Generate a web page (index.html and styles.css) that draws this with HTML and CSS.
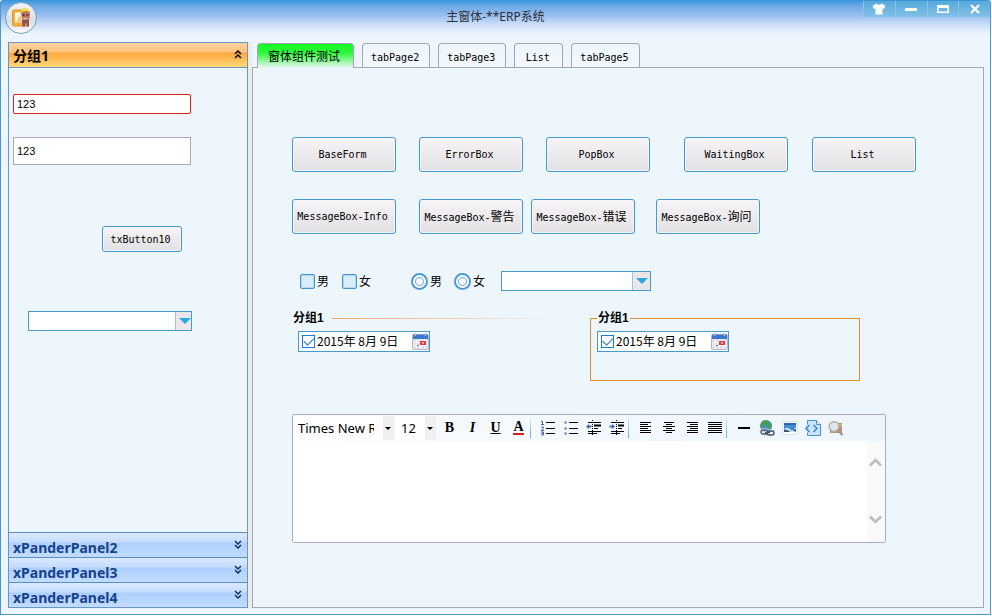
FILE: index.html
```html
<!DOCTYPE html>
<html lang="zh-CN">
<head>
  <meta charset="UTF-8">
  <meta name="viewport" content="width=device-width, initial-scale=1">
  <title>主窗体-**ERP系统</title>
  <link rel="stylesheet" href="styles.css">
</head>
<body>
<div class="window">
  <header class="titlebar">
    <svg class="logo" width="34" height="34" viewBox="0 0 34 34">
      <defs>
        <linearGradient id="ball" x1="0" y1="0" x2="0" y2="1">
          <stop offset="0" stop-color="#f4f4f8"/><stop offset="0.6" stop-color="#dcdce2"/><stop offset="1" stop-color="#fdfdff"/>
        </linearGradient>
      </defs>
      <circle cx="17" cy="17" r="15.500" fill="url(#ball)" stroke="#6fa6bf"/>
      <rect x="8.500" y="9" width="15" height="16" rx="1.500" fill="#f3ae35" stroke="#dd9830"/>
      <path d="M11 11.500h8v10h-8z" fill="#fff6e4"/>
      <path d="M12 21.500l4-8 3 8z" fill="#ecc98d"/>
      <path d="M17 12.500q0-4.500 4.500-4.500t4.500 5.500l-1 6h-6.500z" fill="#bd7560"/>
      <path d="M17 11q1-4.500 5-4 3.500 .5 3.500 4-4-2-8.500 .5z" fill="#f3e04c"/>
      <path d="M18.500 13h2v2h-2zM22.500 13h2v2h-2z" fill="#6a3540"/>
      <path d="M18 19h7v6.500h-2.500v-3h-1.500v3h-2.500z" fill="#8d5458"/>
      <path d="M19.500 17h4v1h-4z" fill="#f2d0b0"/>
    </svg>
    <h1 class="title">主窗体-**ERP系统</h1>
    <div class="controls">
      <button type="button" aria-label="皮肤"><svg width="14" height="12" viewBox="0 0 14 12"><path d="M4 .5Q7 3 10 .5L13.500 3 12 6l-1.500-.7V11.500h-7V5.300L2 6 .5 3z" fill="#fff"/></svg></button>
      <button type="button" aria-label="最小化"><svg width="14" height="12" viewBox="0 0 14 12"><path d="M1 5h12v3H1z" fill="#fff"/></svg></button>
      <button type="button" aria-label="最大化"><svg width="14" height="12" viewBox="0 0 14 12"><path d="M1 2h12v8H1zM2.500 5v3.500h9V5z" fill="#fff" fill-rule="evenodd"/></svg></button>
      <button type="button" aria-label="关闭"><svg width="12" height="12" viewBox="0 0 12 12"><path d="M2 2l8 8M10 2l-8 8" stroke="#fff" stroke-width="2.200"/></svg></button>
    </div>
  </header>

  <main class="main">
    <aside class="sidebar">
      <button type="button" class="pander open"><span>分组1</span>
        <svg width="8" height="9" viewBox="0 0 8 9"><path d="M1 4l3-3 3 3M1 8l3-3 3 3"/></svg></button>
      <div class="pander-body">
        <input type="text" class="text-box error" value="123" aria-label="文本1">
        <input type="text" class="text-box tall" value="123" aria-label="文本2">
        <button type="button" class="btn small">txButton10</button>
        <span class="combo side"><select aria-label="选择"><option></option></select></span>
      </div>
      <button type="button" class="pander"><span>xPanderPanel2</span>
        <svg width="8" height="9" viewBox="0 0 8 9"><path d="M1 1l3 3 3-3M1 5l3 3 3-3"/></svg></button>
      <button type="button" class="pander"><span>xPanderPanel3</span>
        <svg width="8" height="9" viewBox="0 0 8 9"><path d="M1 1l3 3 3-3M1 5l3 3 3-3"/></svg></button>
      <button type="button" class="pander"><span>xPanderPanel4</span>
        <svg width="8" height="9" viewBox="0 0 8 9"><path d="M1 1l3 3 3-3M1 5l3 3 3-3"/></svg></button>
    </aside>
    <div class="splitter"></div>

    <section class="content">
      <nav class="tabs">
        <button type="button" class="tab active">窗体组件测试</button>
        <button type="button" class="tab">tabPage2</button>
        <button type="button" class="tab">tabPage3</button>
        <button type="button" class="tab">List</button>
        <button type="button" class="tab">tabPage5</button>
      </nav>

      <div class="page">
        <div class="btn-row first">
          <button type="button" class="btn">BaseForm</button>
          <button type="button" class="btn">ErrorBox</button>
          <button type="button" class="btn">PopBox</button>
          <button type="button" class="btn">WaitingBox</button>
          <button type="button" class="btn">List</button>
        </div>
        <div class="btn-row second">
          <button type="button" class="btn">MessageBox-Info</button>
          <button type="button" class="btn">MessageBox-<span class="zh">警告</span></button>
          <button type="button" class="btn">MessageBox-<span class="zh">错误</span></button>
          <button type="button" class="btn">MessageBox-<span class="zh">询问</span></button>
        </div>

        <div class="options">
          <div class="option-group checks">
            <label class="option"><input type="checkbox" class="check"><span>男</span></label>
            <label class="option"><input type="checkbox" class="check"><span>女</span></label>
          </div>
          <div class="option-group radios">
            <label class="option"><input type="radio" name="sex" class="radio"><span>男</span></label>
            <label class="option"><input type="radio" name="sex" class="radio"><span>女</span></label>
          </div>
          <span class="combo wide"><select aria-label="下拉框"><option></option></select></span>
        </div>

        <div class="groups">
          <fieldset class="group line">
            <legend>分组1</legend>
            <div class="date">
              <input type="checkbox" class="date-check" checked aria-label="启用日期">
              <input type="text" class="date-text" value="2015年 8月 9日" aria-label="日期">
              <button type="button" class="date-btn" aria-label="日历"><svg width="17" height="17"><use href="#calendar"/></svg></button>
            </div>
          </fieldset>
          <fieldset class="group box">
            <legend>分组1</legend>
            <div class="date">
              <input type="checkbox" class="date-check" checked aria-label="启用日期">
              <input type="text" class="date-text" value="2015年 8月 9日" aria-label="日期">
              <button type="button" class="date-btn" aria-label="日历"><svg width="17" height="17"><use href="#calendar"/></svg></button>
            </div>
          </fieldset>
        </div>

        <div class="editor">
          <div class="toolbar">
            <span class="font-combo"><select class="font-name" aria-label="字体"><option>Times New Roman</option></select></span>
            <span class="font-combo"><select class="font-size" aria-label="字号"><option>12</option></select></span>
            <button type="button" class="tool bold">B</button>
            <button type="button" class="tool italic">I</button>
            <button type="button" class="tool underline">U</button>
            <button type="button" class="tool color"><span>A</span></button>
            <i class="sep"></i>
            <button type="button" class="tool" aria-label="编号"><svg width="16" height="16" viewBox="0 0 16 16"><path d="M6 2.500h9M6 8.500h9M6 13.500h9" stroke="#000"/><path d="M1 1.500h1.500v3M1 4.500h3M1 7h2.500v1.500L1 10.500h3M1 12h2.500v3H1M1.500 13.500h2" stroke="#4a66ad" fill="none"/></svg></button>
            <button type="button" class="tool" aria-label="项目符号"><svg width="16" height="16" viewBox="0 0 16 16"><path d="M6 2.500h9M6 8.500h9M6 13.500h9" stroke="#000"/><path d="M1.500 1.500h2v2h-2zM1.500 7.500h2v2h-2zM1.500 12.500h2v2h-2z" fill="#4a66ad"/></svg></button>
            <button type="button" class="tool" aria-label="减少缩进"><svg width="16" height="16" viewBox="0 0 16 16"><path d="M2 2.500h13M8 8.500h4M2 11.500h13M2 13.500h9" stroke="#000"/><path d="M8 5.500h7" stroke="#000" stroke-width="2"/><path d="M6.500 0v16" stroke="#000" stroke-dasharray="1 1"/><path d="M0 6.500L3 4v1.500h2.500v2H3V9z" fill="#4164b5"/></svg></button>
            <button type="button" class="tool" aria-label="增加缩进"><svg width="16" height="16" viewBox="0 0 16 16"><path d="M2 2.500h13M9 8.500h4M2 11.500h13M2 13.500h9" stroke="#000"/><path d="M9 5.500h6" stroke="#000" stroke-width="2"/><path d="M7.500 0v16" stroke="#000" stroke-dasharray="1 1"/><path d="M6 6.500L3 4v1.500H.5v2H3V9z" fill="#4164b5"/></svg></button>
            <i class="sep"></i>
            <button type="button" class="tool" aria-label="左对齐"><svg width="16" height="16" viewBox="0 0 16 16"><path d="M2 2.500h11M2 4.500h8M2 6.500h11M2 8.500h8M2 10.500h11M2 12.500h11" stroke="#000"/></svg></button>
            <button type="button" class="tool" aria-label="居中"><svg width="16" height="16" viewBox="0 0 16 16"><path d="M3 2.500h10M5 4.500h6M2 6.500h12M5 8.500h6M2 10.500h12M5 12.500h6" stroke="#000"/></svg></button>
            <button type="button" class="tool" aria-label="右对齐"><svg width="16" height="16" viewBox="0 0 16 16"><path d="M3 2.500h11M6 4.500h8M3 6.500h11M6 8.500h8M3 10.500h11M3 12.500h11" stroke="#000"/></svg></button>
            <button type="button" class="tool" aria-label="两端对齐"><svg width="16" height="16" viewBox="0 0 16 16"><path d="M1 2.500h14M1 4.500h14M1 6.500h14M1 8.500h14M1 10.500h14M1 12.500h14" stroke="#000"/></svg></button>
            <i class="sep"></i>
            <button type="button" class="tool" aria-label="水平线"><svg width="16" height="16" viewBox="0 0 16 16"><path d="M2 8h12" stroke="#000" stroke-width="2"/></svg></button>
            <button type="button" class="tool" aria-label="链接"><svg width="16" height="16" viewBox="0 0 16 16"><circle cx="7" cy="6" r="6" fill="#4d86cf"/><path d="M3 1.500q4-2.500 6 0l-1 3-3 1-1 4Q0 7 3 1.500zM9.500 2.500l3 1q1 4-2 6l-2-3z" fill="#45a347"/><path d="M3.500 10h3.500a2 2 0 010 4H4a2 2 0 01-.5-4zM10 11h3a2 2 0 010 4h-3a2 2 0 010-4z" fill="none" stroke="#dce6ee" stroke-width="3"/><path d="M4 10h3a2 2 0 010 4H4a2 2 0 010-4zM10 11h3a2 2 0 010 4h-3a2 2 0 010-4zM6 12.500h5" fill="none" stroke="#455a68" stroke-width="1.300"/></svg></button>
            <button type="button" class="tool" aria-label="图片"><svg width="16" height="16" viewBox="0 0 16 16"><path d="M.5 1.500h15v13H.5z" fill="#f8fafc" stroke="#dbe2e8"/><path d="M2 3h12v9H2z" fill="#3f8bd6"/><path d="M2 3h12v2H2z" fill="#2869b4"/><path d="M2 9q4-3 6 0t6-2v5H2z" fill="#b9dbef"/><path d="M2 12V9.500l4 1 2 1.500zM14 12l-4-3 4 .5z" fill="#35505f"/></svg></button>
            <button type="button" class="tool" aria-label="源代码"><svg width="16" height="16" viewBox="0 0 16 16"><path d="M2.500.5h9l4 4v11h-13z" fill="#c8e3fa" stroke="#4e8fce"/><path d="M11.500.5v4h4" fill="#fff" stroke="#4e8fce"/><path d="M4.500 5L1 8.500 4.500 12M8.500 5l3.500 3.500L8.500 12" fill="none" stroke="#e6f2fc" stroke-width="3.500"/><path d="M4.500 5L1 8.500 4.500 12M8.500 5l3.500 3.500L8.500 12" fill="none" stroke="#3f96e0" stroke-width="1.800"/></svg></button>
            <button type="button" class="tool" aria-label="查找"><svg width="16" height="16" viewBox="0 0 16 16"><path d="M2 3h12v10H2z" fill="#bd9566"/><path d="M8 4h6v2H8z" fill="#d8b27c"/><circle cx="6" cy="6.500" r="4.800" fill="#dfe6ec" stroke="#b0b0ae" stroke-width="1.400"/><path d="M9.500 10l5 5" stroke="#9a9792" stroke-width="2.200"/></svg></button>
          </div>
          <div class="edit-area">
            <textarea aria-label="正文"></textarea>
            <div class="scroller">
              <button type="button" aria-label="向上"><svg width="13" height="9" viewBox="0 0 13 9"><path d="M1 7.500l5.500-5.500L12 7.500"/></svg></button>
              <button type="button" aria-label="向下"><svg width="13" height="9" viewBox="0 0 13 9"><path d="M1 1.500L6.500 7 12 1.500"/></svg></button>
            </div>
          </div>
        </div>
      </div>
    </section>
  </main>
</div>

<svg class="defs" width="0" height="0">
  <symbol id="calendar" viewBox="0 0 17 17">
    <rect x="0.500" y="1.500" width="16" height="15" rx="1" fill="#dfe0ec" stroke="#b4b6cc"/>
    <path d="M1 1.500h15V6H1z" fill="#3d77cf"/>
    <path d="M3.500 0v3M13.500 0v3" stroke="#aebbd6" stroke-width="1.500"/>
    <path d="M1 9.500h15M1 12.500h15M4.500 6v10M8.500 6v10M12.500 6v10" stroke="#fafafe"/>
    <path d="M8 8h6v4H8z" fill="#dc3c4c"/>
    <path d="M10 9.500h2v1h-2z" fill="#fff"/>
    <path d="M5 12h2v1H5z" fill="#8d6a76"/>
  </symbol>
</svg>
</body>
</html>
```
FILE: styles.css
```css
* {
  box-sizing: border-box;
}
body {
  margin: 0;
  padding: 0 1px 1px 0;
  height: 100vh;
  background: #fff;
  font-family: "DejaVu Sans Mono", "Noto Sans CJK SC", monospace;
  font-size: 10px;
  color: #000;
}
button, input, select, textarea {
  font: inherit;
  color: inherit;
  margin: 0;
  padding: 0;
}
.defs {
  display: none;
}
.zh, .option, legend {
  font-family: "Liberation Sans", "Noto Sans CJK SC", sans-serif;
  font-size: 12px;
}
.window {
  display: flex;
  flex-direction: column;
  height: 100%;
  border: 1px solid #4c98cb;
  border-top-color: #3b94d9;
  border-radius: 3px 3px 0 0;
  background: #edf5fd;
}

/* title bar */
.titlebar {
  display: grid;
  grid-template-columns: 124px 1fr 127px;
  align-items: start;
  height: 41px;
  padding-left: 3px;
  background: linear-gradient(#3f99dd 0, #6daae6 5px, #91bbee 13px, #c3d9f6 22px, #dfecfa 29px, #edf5fd 33px);
}
.title {
  margin: 6px 0 0;
  text-align: center;
  font: 12px/20px "Noto Sans", "Noto Sans CJK SC", sans-serif;
  color: #2c3036;
}
.controls {
  display: flex;
}
.controls button {
  flex: 1;
  display: flex;
  justify-content: center;
  align-items: center;
  height: 16px;
  border: 0;
  border-left: 1px solid #8cc5e4;
  background: linear-gradient(#55a9dc, #84c0e6);
}

/* body */
.main {
  flex: 1;
  display: grid;
  grid-template-columns: 240px 4px 1fr;
  min-height: 0;
  padding: 0 6px 6px 7px;
}
.splitter {
  background: #ececed;
}
.sidebar {
  display: flex;
  flex-direction: column;
  border: 1px solid #6b95c2;
}
.pander {
  display: flex;
  justify-content: space-between;
  align-items: center;
  height: 25px;
  padding: 5px 5px 0 4px;
  border: 0;
  border-top: 1px solid #5b8dc0;
  background: linear-gradient(#dbe9ff 0, #c6dcff 9px, #aed0ff 10px, #c2dcff 24px);
  font: bold 14px/18px "Noto Sans", "Noto Sans CJK SC", sans-serif;
  color: #15428b;
}
.pander svg {
  fill: none;
  stroke: #15305f;
  stroke-width: 1.5;
  margin-bottom: 6px;
}
.pander.open {
  padding-top: 2px;
  border-top: 0;
  border-bottom: 1px solid #6b95c2;
  background: linear-gradient(#ffd3a0 0, #ffc27c 9px, #ffa73f 10px, #ffd97a 24px);
  color: #000;
}
.pander.open svg {
  margin-bottom: 3px;
  stroke: #000;
}
.pander-body {
  flex: 1;
  display: flex;
  flex-direction: column;
  align-items: flex-start;
  padding: 26px 4px 0;
}
.text-box {
  width: 178px;
  height: 20px;
  padding: 0 3px 1px;
  border: 1px solid #a9aabc;
  background: #fff;
  font: 11px "Liberation Sans", sans-serif;
}
.text-box.error {
  border-color: #d81e1e;
  border-radius: 2px;
}
.text-box.tall {
  height: 28px;
  margin-top: 23px;
}
.btn {
  width: 104px;
  height: 35px;
  padding-right: 3px;
  border: 1px solid #4499cc;
  border-radius: 3px;
  background: linear-gradient(#f7f4f7, #e2e0e2);
  box-shadow: inset 0 0 0 1px #f4f6fa;
  white-space: nowrap;
}
.btn .zh {
  line-height: 12px;
}
.btn.small {
  width: 80px;
  height: 26px;
  margin: 61px 0 0 89px;
}
.combo {
  position: relative;
  display: block;
  height: 20px;
}
.combo select {
  display: block;
  appearance: none;
  width: 100%;
  height: 100%;
  border: 1px solid #469bc8;
  border-radius: 0;
  background: #fff;
}
.combo::before {
  content: "";
  position: absolute;
  top: 1px;
  right: 1px;
  bottom: 1px;
  width: 17px;
  border-left: 1px solid #9fc4dc;
  background: #e9e7ea;
  pointer-events: none;
}
.combo::after {
  content: "";
  position: absolute;
  top: 7px;
  right: 3px;
  border: 6px solid transparent;
  border-top-color: #2aa8e0;
  border-bottom: 0;
  pointer-events: none;
}
.combo.side {
  width: 164px;
  margin: 59px 0 0 15px;
}
.combo.side::before {
  width: 15px;
}
.combo.side::after {
  right: 1px;
}
.combo.wide {
  width: 150px;
}

/* tabs */
.content {
  display: flex;
  flex-direction: column;
  min-width: 0;
}
.tabs {
  display: flex;
  align-items: flex-end;
  gap: 8px;
  height: 25px;
  padding-left: 5px;
}
.tab {
  min-width: 49px;
  height: 24px;
  padding: 3px 10px 0 8px;
  border: 1px solid #a3a8b4;
  border-bottom: 0;
  border-radius: 4px 4px 0 0;
  background: linear-gradient(#edf5fd, #f4f8fd);
}
.tab.active {
  height: 25px;
  margin-bottom: -1px;
  padding: 0 13px 2px 10px;
  z-index: 1;
  background: linear-gradient(#12fb22 0, #2df83a 9px, #edf8f5 24px);
  font: 12px "Liberation Sans", "Noto Sans CJK SC", sans-serif;
}
.page {
  flex: 1;
  padding: 69px 39px 0;
  border: 1px solid #a3a8b4;
}
.btn-row {
  display: grid;
}
.first {
  grid-template-columns: 127px 127px 138px 128px 104px;
}
.second {
  grid-template-columns: 127px 112px 125px 104px;
  margin-top: 27px;
}

/* check boxes and radios */
.options {
  display: flex;
  align-items: center;
  height: 20px;
  margin-top: 37px;
  padding-left: 8px;
}
.option-group {
  display: flex;
}
.checks {
  width: 111px;
  gap: 13px;
}
.radios {
  width: 90px;
  gap: 12px;
}
.option {
  display: flex;
  align-items: center;
  gap: 2px;
  line-height: 18px;
}
.option span {
  padding-top: 2px;
}
.check {
  appearance: none;
  width: 15px;
  height: 15px;
  border: 1px solid #3f97cd;
  border-radius: 2px;
  background: #d9ecfa;
  box-shadow: inset 0 0 0 1px #b3d8f2;
}
.radio {
  appearance: none;
  width: 17px;
  height: 17px;
  border: 2px solid #4a9bd3;
  border-radius: 50%;
  background: radial-gradient(circle, #f4f9fe 3px, #7cb0d8 4px, #fff 5px);
}

/* group boxes */
.groups {
  display: grid;
  grid-template-columns: 298px 270px;
  margin-top: 19px;
}
.group {
  margin: 0;
  min-width: 0;
}
legend {
  padding: 0 1px;
  font-weight: bold;
  line-height: 16px;
}
.line {
  padding: 5px 6px 0 0;
  border: 0;
}
.line legend {
  display: flex;
  align-items: center;
  gap: 8px;
  width: 270px;
}
.line legend::after {
  content: "";
  flex: 1;
  height: 1px;
  background: linear-gradient(90deg, #f3a26c, #edf5fd);
}
.line .date {
  margin-left: 6px;
}
.box {
  padding: 5px 6px 28px;
  border: 1px solid #e1922d;
}
.date {
  display: flex;
  align-items: center;
  width: 132px;
  height: 21px;
  padding: 0 0 0 3px;
  border: 1px solid #469bc8;
  background: #fff;
}
.date-check {
  appearance: none;
  flex: none;
  display: grid;
  place-items: center;
  width: 13px;
  height: 13px;
  border: 1px solid #1a7fd0;
  background: #fff;
}
.date-check:checked::after {
  content: "";
  width: 9px;
  height: 5px;
  margin-bottom: 3px;
  border: solid #2877bb;
  border-width: 0 0 1px 1px;
  transform: rotate(-45deg);
}
.date-text {
  flex: 1;
  min-width: 0;
  padding: 0 0 2px 2px;
  border: 0;
  background: none;
  font: 12px "Noto Sans CJK SC", sans-serif;
}
.date-btn {
  display: flex;
  border: 0;
  background: none;
}

/* rich text editor */
.editor {
  width: 594px;
  margin-top: 33px;
  border: 1px solid #a9abbd;
  border-radius: 2px;
  background: #fff;
}
.toolbar {
  display: flex;
  align-items: center;
  height: 26px;
  padding-left: 2px;
  background: linear-gradient(90deg, #fafcff, #edf5fd);
}
.font-combo {
  position: relative;
  height: 24px;
  margin-right: 2px;
}
.font-combo select {
  appearance: none;
  height: 24px;
  padding: 0 20px 0 3px;
  border: 0;
  border-radius: 0;
  background: linear-gradient(#f0f0f0, #f0f0f0) right / 11px 100% no-repeat, #fff;
  font: 13px "Noto Sans", sans-serif;
}
.font-combo::after {
  content: "";
  position: absolute;
  top: 11px;
  right: 3px;
  border: 3px solid transparent;
  border-top-color: #000;
  border-bottom: 0;
  pointer-events: none;
}
.font-combo .font-name {
  width: 99px;
}
.font-combo .font-size {
  width: 40px;
  padding-left: 5px;
}
.tool {
  display: flex;
  justify-content: center;
  align-items: center;
  width: 23px;
  height: 24px;
  border: 0;
  background: none;
  font: bold 14px/14px "Liberation Serif", serif;
}
.italic {
  font-style: italic;
}
.underline {
  text-decoration: underline;
}
.color span {
  border-bottom: 2px solid #d02020;
  line-height: 12px;
}
.sep {
  width: 6px;
  height: 20px;
  background: linear-gradient(#d6eaf4, #5fafcf) left / 1px 100% no-repeat;
}
.edit-area {
  display: flex;
  height: 101px;
}
textarea {
  flex: 1;
  border: 0;
  resize: none;
  background: #fff;
}
.scroller {
  display: flex;
  flex-direction: column;
  justify-content: space-between;
  width: 18px;
  padding: 17px 2px 18px 0;
  background: #f8f9fa;
}
.scroller button {
  display: flex;
  justify-content: center;
  border: 0;
  background: none;
}
.scroller svg {
  fill: none;
  stroke: #bcbcbc;
  stroke-width: 2.5;
}
```
